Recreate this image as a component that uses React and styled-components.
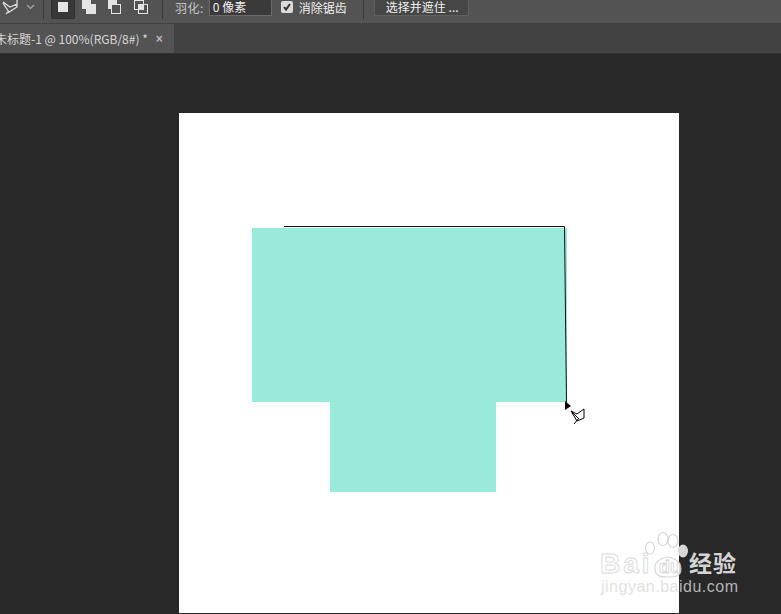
import styled, { createGlobalStyle } from 'styled-components';

const GlobalStyle = createGlobalStyle`
  html, body {
    margin: 0;
    padding: 0;
    background: #282828;
    overflow: hidden;
  }
  body {
    font-family: "Noto Sans CJK SC", "Liberation Sans", sans-serif;
  }
`;

const Page = styled.div`
  width: 781px;
  height: 614px;
  display: flex;
  flex-direction: column;
  overflow: hidden;
  position: relative;
`;

const Toolbar = styled.div`
  height: 24px;
  flex: none;
  display: flex;
  align-items: flex-start;
  box-sizing: border-box;
  background: #535353;
  border-bottom: 1px solid #424242;
  color: #e6e6e6;
  font-size: 12px;
  overflow: hidden;
`;

const ToolIcon = styled.div`
  width: 23px;
  height: 19px;
  margin-left: 2px;
  flex: none;
`;

const Chevron = styled.div`
  width: 13px;
  height: 14px;
  flex: none;
`;

const Sep = styled.div`
  width: 1px;
  height: 19px;
  background: #383838;
  flex: none;
  margin-left: ${({ $left }) => $left}px;
`;

const ShapeButton = styled.div`
  width: 24px;
  height: 19px;
  flex: none;
  margin-left: ${({ $left }) => $left || 2}px;
  display: flex;
  align-items: flex-start;
  justify-content: center;
  border-radius: 0 0 2px 2px;
  background: ${({ $active }) => ($active ? '#383838' : 'transparent')};
  border: 1px solid ${({ $active }) => ($active ? '#2e2e2e' : 'transparent')};
  border-top: 0;
  box-sizing: border-box;
`;

const Label = styled.span`
  flex: none;
  margin-left: ${({ $left }) => $left}px;
  line-height: 15px;
  white-space: nowrap;
  letter-spacing: ${({ $dim }) => ($dim ? '0.5px' : '0')};
  color: ${({ $dim }) => ($dim ? '#c4c4c4' : '#f0f0f0')};
`;

const NumberBox = styled.div`
  width: 63px;
  height: 16px;
  flex: none;
  margin-left: 5px;
  box-sizing: border-box;
  padding-left: 3px;
  background: #3a3a3a;
  border: 1px solid #6a6a6a;
  border-top: 0;
  line-height: 14px;
  color: #ececec;
`;

const Check = styled.div`
  width: 12px;
  height: 12px;
  flex: none;
  margin: 1px 0 0 9px;
  border-radius: 2px;
  background: #dcdcdc;
  display: flex;
  align-items: center;
  justify-content: center;
`;

const SelectButton = styled.div`
  width: 95px;
  height: 16px;
  flex: none;
  margin-left: 10px;
  box-sizing: border-box;
  padding-left: 11px;
  background: #464646;
  border: 1px solid #606060;
  border-top: 0;
  line-height: 13px;
  white-space: nowrap;
  color: #f0f0f0;
`;

const TabBar = styled.div`
  height: 30px;
  flex: none;
  display: flex;
  background: #424242;
  border-bottom: 1px solid #333;
  box-sizing: border-box;
  overflow: hidden;
`;

const Tab = styled.div`
  width: 174px;
  flex: none;
  display: flex;
  align-items: center;
  background: #535353;
  overflow: hidden;
  color: #d6d6d6;
  font-size: 12px;
  white-space: nowrap;
`;

const TabTitle = styled.span`
  margin-left: -5px;
  flex: none;
`;

const TabClose = styled.span`
  margin-left: 8px;
  font-family: "Liberation Sans", sans-serif;
  font-size: 12px;
  font-weight: 700;
  color: #b8b8b8;
`;

const Workspace = styled.div`
  flex: 1;
  background: #282828;
  padding: 59px 0 0 179px;
`;

const Artboard = styled.div`
  width: 500px;
  height: 500px;
  background: #fff;
`;

const Drawing = styled.svg`
  display: block;
`;

const Watermark = styled.div`
  position: absolute;
  left: 600px;
  top: 528px;
  width: 150px;
  height: 72px;
`;

const BaiText = styled.div`
  position: absolute;
  left: 0;
  top: 20px;
  font-family: "Liberation Sans", sans-serif;
  font-size: 28px;
  font-weight: 700;
  line-height: 32px;
  letter-spacing: 3px;
  color: rgba(255, 255, 255, 0.9);
  -webkit-text-stroke: 1px rgba(205, 205, 205, 0.7);
  white-space: nowrap;
`;

const PawMark = styled.svg`
  position: absolute;
  left: 44px;
  top: 4px;
`;

const JingText = styled.div`
  position: absolute;
  left: 89px;
  top: 21px;
  font-size: 23px;
  font-weight: 700;
  line-height: 26px;
  letter-spacing: 1px;
  color: #d4d4d4;
  white-space: nowrap;
`;

const UrlText = styled.div`
  position: absolute;
  left: 1px;
  top: 50px;
  font-family: "Liberation Sans", sans-serif;
  font-size: 16px;
  letter-spacing: 0.5px;
  color: rgba(218, 218, 218, 0.8);
  white-space: nowrap;
`;

const pawToe = { fill: 'rgba(255,255,255,0.9)', stroke: 'rgba(205,205,205,0.8)', strokeWidth: 1.2 };

const App = () => (
  <Page>
    <GlobalStyle />
    <Toolbar>
      <ToolIcon>
        <svg width="23" height="19" viewBox="0 0 23 19" fill="none" stroke="#dcdcdc" strokeWidth="1.3">
          <path d="M1 2l7 5 7-3V0M15 4v3L7 12 1 3M7 11l-3 3" />
        </svg>
      </ToolIcon>
      <Chevron>
        <svg width="13" height="14" viewBox="0 0 13 14" fill="none" stroke="#a8a8a8" strokeWidth="1.2">
          <path d="M2 5l3.5 3.5L9 5" />
        </svg>
      </Chevron>
      <Sep $left={5} />
      <ShapeButton $active $left={7}>
        <svg width="12" height="13"><rect x="1" y="2" width="10" height="10" fill="#e4e4e4" /></svg>
      </ShapeButton>
      <ShapeButton>
        <svg width="16" height="15" fill="#e4e4e4">
          <rect x="1" y="0" width="9" height="9" />
          <rect x="5" y="4" width="10" height="10" />
        </svg>
      </ShapeButton>
      <ShapeButton>
        <svg width="16" height="15" fill="none">
          <rect x="1" y="0" width="9" height="9" fill="#e4e4e4" />
          <rect x="4.5" y="4.5" width="9" height="9" fill="#535353" stroke="#e4e4e4" />
        </svg>
      </ShapeButton>
      <ShapeButton>
        <svg width="16" height="15" fill="none" stroke="#e4e4e4">
          <rect x="1.5" y="0.5" width="9" height="9" />
          <rect x="5.5" y="4.5" width="9" height="9" />
          <rect x="6" y="5" width="4" height="4" fill="#e4e4e4" stroke="none" />
        </svg>
      </ShapeButton>
      <Sep $left={9} />
      <Label $dim $left={12}>羽化:</Label>
      <NumberBox>0 像素</NumberBox>
      <Check>
        <svg width="10" height="10" fill="none" stroke="#333" strokeWidth="2">
          <path d="M2 5l2 2.5L8 2" />
        </svg>
      </Check>
      <Label $left={6}>消除锯齿</Label>
      <Sep $left={16} />
      <SelectButton>选择并遮住 ...</SelectButton>
    </Toolbar>
    <TabBar>
      <Tab>
        <TabTitle>未标题-1 @ 100%(RGB/8#) *</TabTitle>
        <TabClose>×</TabClose>
      </Tab>
    </TabBar>
    <Workspace>
      <Artboard>
        <Drawing width="500" height="500" viewBox="0 0 500 500">
          <path d="M73 115H388V289H317V379H151V289H73Z" fill="#9aeadb" />
          <path d="M105 113.5H385.5L387.5 289" fill="none" stroke="#111" strokeWidth="1" />
          <path d="M386 288v9l6-4z" fill="#000" />
          <path
            d="M392 298l6 3 7-5v9l-7 3zM392 298l8 8M400 305l-5 6"
            fill="#fff"
            stroke="#000"
            strokeWidth="1"
          />
        </Drawing>
      </Artboard>
    </Workspace>
    <Watermark>
      <BaiText>Bai</BaiText>
      <PawMark width="50" height="48" viewBox="0 0 50 48">
        <ellipse cx="6" cy="16" rx="4.5" ry="6" {...pawToe} />
        <ellipse cx="19" cy="7" rx="5" ry="6.5" {...pawToe} />
        <ellipse cx="29" cy="9" rx="5" ry="6.5" {...pawToe} />
        <ellipse cx="39" cy="19" rx="5" ry="6.5" fill="#d8d8d8" />
        <path
          d="M11 36c0-8 9-11 13-11s13 4 13 12-7 8-13 8-13 0-13-9z"
          fill="rgba(255,255,255,0.7)"
          stroke="rgba(205,205,205,0.8)"
          strokeWidth="1.2"
        />
        <text
          x="15"
          y="41"
          fontFamily="Liberation Sans, sans-serif"
          fontSize="18"
          fontWeight="700"
          fill="rgba(255,255,255,0.85)"
          stroke="rgba(200,200,200,0.8)"
          strokeWidth="0.8"
        >
          du
        </text>
      </PawMark>
      <JingText>经验</JingText>
      <UrlText>jingyan.baidu.com</UrlText>
    </Watermark>
  </Page>
);

export default App;
